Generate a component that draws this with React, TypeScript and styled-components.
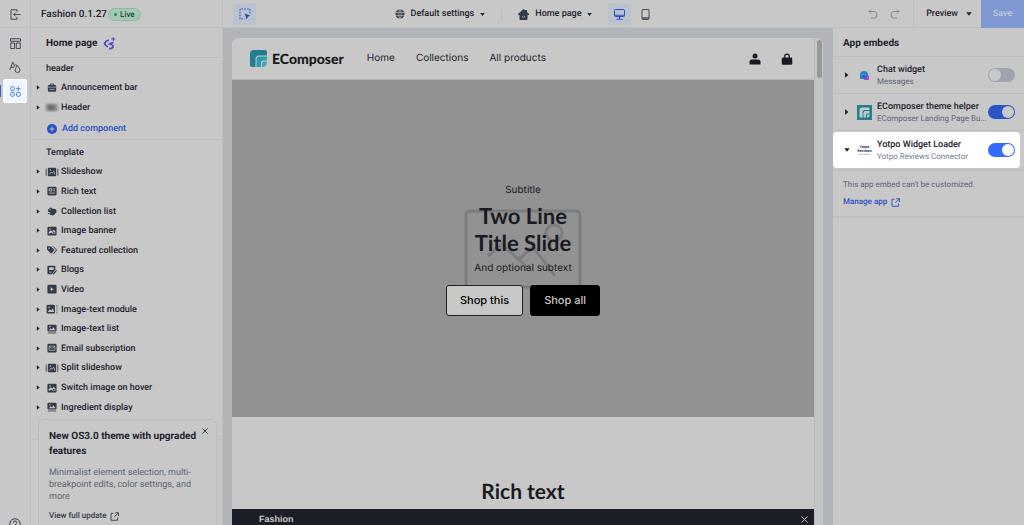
import React from 'react';
import styled, { createGlobalStyle, css } from 'styled-components';

const ui = `Roboto, Inter, sans-serif`;
const shop = `Inter, "Open Sans", sans-serif`;
const display = `Lato, "Open Sans", sans-serif`;

const c = {
  surface: '#c8c8c8',
  line: '#bdbec0',
  canvas: '#b1b4b9',
  ink: '#1e222d',
  icon: '#343b48',
  muted: '#5d6474',
  blue: '#2951c6',
  tint: '#b9c2cd',
};

const GlobalStyle = createGlobalStyle`
  * { box-sizing: border-box; }
  body { margin: 0; font-family: ${ui}; color: ${c.ink}; background: ${c.surface}; overflow: hidden; text-rendering: geometricPrecision; }
  button { font: inherit; color: inherit; background: none; border: 0; padding: 0; cursor: pointer; text-rendering: inherit; }
  h1, h2, h3, p, ul { margin: 0; padding: 0; font-weight: inherit; }
  ul { list-style: none; }
  a { text-decoration: none; color: inherit; }
  svg { display: block; flex: none; }
`;

const Page = styled.div`
  display: flex;
  flex-direction: column;
  height: 100vh;
`;

const TopBar = styled.header`
  display: grid;
  grid-template-columns: 223px 1fr 191px;
  flex: none;
  height: 28px;
  border-bottom: 1px solid ${c.line};
`;

const TopLeft = styled.div`
  display: flex;
  align-items: center;
  border-right: 1px solid ${c.line};
`;

const ExitButton = styled.button`
  display: flex;
  align-items: center;
  justify-content: center;
  width: 31px;
  height: 100%;
  margin-right: 10px;
  border-right: 1px solid ${c.line};
`;

const ThemeName = styled.span`
  font-size: 10px;
  font-weight: 500;
`;

const LiveBadge = styled.span`
  display: flex;
  align-items: center;
  gap: 3px;
  height: 13px;
  margin-left: 1px;
  padding: 0 5px;
  border: 1px solid #8fb8a2;
  border-radius: 7px;
  background: #a3c9b3;
  color: #20453a;
  font-size: 8px;
  font-weight: 500;
  &::before {
    content: '';
    width: 3px;
    height: 3px;
    border-radius: 50%;
    background: #238a5b;
  }
`;

const TopCenter = styled.div`
  display: grid;
  grid-template-columns: 1fr auto 1fr;
  align-items: center;
  padding-left: 10px;
`;

const CenterGroup = styled.div`
  display: flex;
  align-items: center;
  padding-right: 14px;
`;

const Tool = styled.button<{ $active?: boolean }>`
  display: flex;
  align-items: center;
  justify-content: center;
  width: 23px;
  height: 22px;
  border-radius: 3px;
  background: ${(p) => (p.$active ? c.tint : 'transparent')};
  color: ${(p) => (p.$active ? c.blue : c.icon)};
`;

const Menu = styled.button`
  display: flex;
  align-items: center;
  gap: 6px;
  font-size: 9px;
  font-weight: 500;
  white-space: nowrap;
`;

const Split = styled.span`
  width: 1px;
  height: 13px;
  margin: 0 16px;
  background: ${c.line};
`;

const Devices = styled.div`
  display: flex;
  gap: 3px;
  margin-left: 16px;
`;

const TopRight = styled.div`
  display: flex;
  align-items: center;
  justify-content: flex-end;
`;

const History = styled.div`
  display: flex;
  gap: 10px;
  padding-right: 12px;
  color: #85888f;
`;

const Preview = styled(Menu)`
  gap: 8px;
  height: 100%;
  padding: 0 9px 0 12px;
  border-left: 1px solid ${c.line};
`;

const Save = styled.button`
  width: 43px;
  height: 28px;
  background: #7f98d1;
  color: #bcc5d8;
  font-size: 9px;
  font-weight: 600;
`;

const Main = styled.div`
  display: grid;
  grid-template-columns: 31px 192px 1fr 191px;
  flex: 1;
  min-height: 0;
`;

const Rail = styled.nav`
  display: flex;
  flex-direction: column;
  align-items: center;
  padding-top: 3px;
  border-right: 1px solid ${c.line};
  overflow: hidden;
`;

const RailButton = styled.button<{ $active?: boolean }>`
  display: flex;
  align-items: center;
  justify-content: center;
  flex: none;
  width: 24px;
  height: 24px;
  border-radius: 3px;
  color: ${c.icon};
  ${(p) =>
    p.$active &&
    css`
      position: relative;
      background: #f1f7ff;
      box-shadow: inset 0 0 0 1px #fff;
      color: #4a7ff5;
      &::before {
        content: '';
        position: absolute;
        left: -3px;
        top: 6px;
        width: 1px;
        height: 12px;
        background: #3c63c9;
      }
    `}
`;

const Help = styled(RailButton)`
  margin-top: auto;
  margin-bottom: -11px;
`;

const Panel = styled.aside`
  position: relative;
  display: flex;
  flex-direction: column;
  border-right: 1px solid ${c.line};
  overflow: hidden;
`;

const PanelTitle = styled.h2`
  display: flex;
  align-items: center;
  gap: 6px;
  flex: none;
  height: 30px;
  padding: 1px 0 0 15px;
  border-bottom: 1px solid ${c.line};
  font-size: 10px;
  font-weight: 700;
`;

const Group = styled.section`
  flex: none;
  padding: 0 5px;
  border-bottom: 1px solid ${c.line};
`;

const GroupLabel = styled.h3`
  padding: 3px 10px 0;
  font-size: 9px;
  line-height: 17px;
  font-weight: 500;
`;

const Tree = styled.ul<{ $height: number }>`
  display: grid;
  grid-auto-rows: 1fr;
  height: ${(p) => p.$height}px;
`;

const TreeItem = styled.li`
  display: grid;
  grid-template-columns: 8px 14px 1fr;
  align-items: center;
  column-gap: 1px;
  font-size: 9px;
  font-weight: 500;
  white-space: nowrap;
`;

const TreeIcon = styled.span`
  display: flex;
  justify-content: center;
`;

const TreeName = styled.span`
  padding: 1px 0 0 1px;
`;

const AddButton = styled.button`
  display: flex;
  align-items: center;
  gap: 5px;
  height: 22px;
  padding: 1px 0 0 11px;
  color: ${c.blue};
  font-size: 9px;
  font-weight: 500;
`;

const TemplateGroup = styled(Group)`
  padding-top: 2px;
  padding-bottom: 22px;
`;

const Notice = styled.section`
  position: absolute;
  left: 7px;
  right: 5px;
  top: 391px;
  display: flex;
  flex-direction: column;
  gap: 8px;
  height: 130px;
  padding: 9px 10px;
  border: 1px solid #bbbcbf;
  border-radius: 6px;
  background: ${c.surface};
`;

const NoticeTitle = styled.h3`
  font-size: 10px;
  line-height: 15px;
  font-weight: 700;
  white-space: nowrap;
`;

const NoticeText = styled.p`
  color: ${c.muted};
  font-size: 9px;
  line-height: 12px;
`;

const IconLink = styled.a<{ $accent?: boolean }>`
  display: flex;
  align-items: center;
  gap: 4px;
  color: ${(p) => (p.$accent ? c.blue : c.icon)};
  font-size: 8px;
  line-height: 10px;
  font-weight: 500;
`;

const NoticeClose = styled.button`
  position: absolute;
  top: 8px;
  right: 8px;
`;

const Canvas = styled.main`
  display: flex;
  min-width: 0;
  padding: 10px 10px 0 9px;
  background: ${c.canvas};
`;

const Frame = styled.div`
  display: flex;
  flex: 1;
  min-width: 0;
  border-radius: 6px 6px 0 0;
  background: ${c.surface};
  overflow: hidden;
`;

const Store = styled.div`
  display: flex;
  flex-direction: column;
  flex: 1;
  min-width: 0;
`;

const ScrollTrack = styled.div`
  width: 9px;
  padding: 2px 1px;
  border-left: 1px solid #b9b9bb;
  background: #c4c4c4;
`;

const ScrollThumb = styled.div`
  width: 5px;
  height: 38px;
  margin-left: 1px;
  border-radius: 3px;
  background: #989898;
`;

const StoreHeader = styled.header`
  display: flex;
  align-items: center;
  flex: none;
  height: 42px;
  padding: 0 21px 0 18px;
  border-bottom: 1px solid #b9b9b9;
`;

const Brand = styled.a`
  display: flex;
  align-items: center;
  gap: 5px;
  color: #191919;
  font-family: ${display};
  font-size: 14px;
  font-weight: 900;
`;

const StoreNav = styled.nav`
  display: flex;
  gap: 21px;
  flex: 1;
  padding: 0 0 2px 23px;
  font-family: ${shop};
  font-size: 10px;
`;

const StoreActions = styled.div`
  display: flex;
  gap: 20px;
  color: #1b1a22;
`;

const Hero = styled.section`
  position: relative;
  display: flex;
  flex-direction: column;
  align-items: center;
  justify-content: center;
  flex: none;
  height: 337px;
  padding-bottom: 1px;
  background: #929292;
  font-family: ${shop};
  color: #1b1a22;
`;

const Placeholder = styled.svg`
  position: absolute;
  top: 50%;
  left: 50%;
  transform: translate(-50%, -50%);
`;

const HeroText = styled.p`
  position: relative;
  font-size: 10px;
  line-height: 18px;
`;

const HeroTitle = styled.h1`
  position: relative;
  margin: 3px 0;
  font-family: ${display};
  font-size: 22px;
  line-height: 27px;
  font-weight: 700;
  text-align: center;
`;

const HeroActions = styled.div`
  position: relative;
  display: flex;
  gap: 7px;
  margin-top: 8px;
`;

const HeroButton = styled.button<{ $solid?: boolean }>`
  height: 31px;
  padding: 0 13px;
  border: 1px solid ${(p) => (p.$solid ? '#000' : '#222')};
  border-radius: 3px;
  background: ${(p) => (p.$solid ? '#000' : c.surface)};
  color: ${(p) => (p.$solid ? '#c8c8c8' : '#000')};
  font-size: 11px;
  font-weight: 500;
`;

const RichText = styled.section`
  display: flex;
  justify-content: center;
  flex: 1;
  min-height: 0;
  padding-top: 61px;
  overflow: hidden;
`;

const RichTitle = styled.h2`
  color: #1b1a22;
  font-family: ${display};
  font-size: 21px;
  line-height: 27px;
  font-weight: 700;
`;

const AdminBar = styled.footer`
  display: flex;
  align-items: center;
  justify-content: space-between;
  flex: none;
  height: 16px;
  padding: 4px 6px 0 27px;
  background: #1b1e27;
  color: #c8c8c8;
  font-family: "Liberation Sans", sans-serif;
  font-size: 9px;
  font-weight: 700;
`;

const Settings = styled.aside`
  display: flex;
  flex-direction: column;
  min-width: 0;
`;

const SettingsTitle = styled.h2`
  flex: none;
  padding: 3px 10px 0;
  border-bottom: 1px solid ${c.line};
  font-size: 10px;
  line-height: 25px;
  font-weight: 700;
`;

const Embed = styled.label<{ $spot?: boolean }>`
  display: grid;
  grid-template-columns: 8px 15px 1fr 27px;
  align-items: center;
  flex: none;
  height: 37px;
  padding: 0 9px 0 11px;
  column-gap: 5px;
  border-bottom: 1px solid ${c.line};
  ${(p) =>
    p.$spot &&
    css`
      height: 36px;
      margin: 1px 4px 0 0;
      padding-right: 5px;
      border: 0;
      border-radius: 4px;
      background: #fff;
    `}
`;

const EmbedText = styled.span`
  display: flex;
  flex-direction: column;
  min-width: 0;
  padding-top: 2px;
`;

const EmbedName = styled.span`
  font-size: 9px;
  line-height: 12px;
  font-weight: 500;
  white-space: nowrap;
`;

const EmbedApp = styled.span<{ $spot?: boolean }>`
  color: ${(p) => (p.$spot ? '#737c91' : c.muted)};
  font-size: 8px;
  line-height: 12px;
  white-space: nowrap;
`;

const Toggle = styled.input<{ $spot?: boolean }>`
  appearance: none;
  display: flex;
  align-items: center;
  width: 27px;
  height: 14px;
  margin: 0;
  padding: 0 1px;
  border-radius: 7px;
  background: #a0a4ae;
  cursor: pointer;
  &::before {
    content: '';
    width: 12px;
    height: 12px;
    border-radius: 50%;
    background: ${(p) => (p.$spot ? '#fff' : c.surface)};
  }
  &:checked {
    justify-content: flex-end;
    background: ${(p) => (p.$spot ? '#346bff' : '#2a54c9')};
  }
`;

const EmbedDetail = styled.div`
  display: flex;
  flex-direction: column;
  gap: 7px;
  margin-top: 1px;
  padding: 9px 10px;
  border-top: 2px solid #c0c0c1;
  border-bottom: 2px solid #bfbfc1;
`;

const DetailText = styled.p`
  color: ${c.muted};
  font-size: 8px;
  line-height: 10px;
`;

const Caret = ({ down = false, size = 5 }: { down?: boolean; size?: number }) => (
  <svg width={size} height={size} viewBox="0 0 6 6" fill="currentColor" aria-hidden>
    {down ? <path d="M.3 1.2h5.4L3 4.8z" /> : <path d="M1 .3v5.4l3.4-2.7z" />}
  </svg>
);

const External = () => (
  <svg width="9" height="9" viewBox="0 0 18 18" fill="none" stroke="currentColor" strokeWidth="1.8" aria-hidden>
    <path d="M7 2.5H2v14h13V11M10.5 1.5H17V8M17 1.5 8.5 10" />
  </svg>
);

const Cross = ({ size = 7 }: { size?: number }) => (
  <svg width={size} height={size} viewBox="0 0 8 8" stroke="currentColor" strokeWidth="1.1" aria-hidden>
    <path d="M.5.5l7 7M7.5.5l-7 7" />
  </svg>
);

const ComposerMark = ({ size }: { size: number }) => (
  <svg width={size} height={size} viewBox="0 0 34 34" aria-hidden>
    <path d="M8 0h22q4 0 4 4v7H18q-7 0-7 7v16H4q-4 0-4-4V8q0-8 8-8z" fill="#247f93" />
    <path d="M19 13h15v8h-7q-5 0-5 5v8h-9V19q0-6 6-6z" fill="#2f9cb3" />
    <path d="M28 23h6q0 11-10 11v-6q0-5 4-5z" fill="#3aa5bb" />
  </svg>
);

type IconKind = 'case' | 'slides' | 'rich' | 'tagcut' | 'image' | 'caption' | 'tags' | 'blog' | 'video' | 'imagetext' | 'mail' | 'blur';

const hole = c.surface;
const shapes: Record<Exclude<IconKind, 'blur'>, React.ReactNode> = {
  case: (
    <>
      <path d="M8 5V2.5h8V5" fill="none" stroke="currentColor" strokeWidth="2" />
      <rect x="2" y="5" width="20" height="16" rx="2.5" fill="currentColor" />
      <path d="M2 10h20M6 15.5h12" stroke={hole} strokeWidth="1.6" />
    </>
  ),
  slides: (
    <>
      <path d="M-2 4v17M26 4v17" stroke="currentColor" strokeWidth="2" />
      <rect x="2" y="2" width="20" height="20" rx="2.5" fill="currentColor" />
      <path d="M5 18l5-6 3 3 3-5 3 8" fill="none" stroke={hole} strokeWidth="1.7" />
      <circle cx="8" cy="7" r="1.8" fill={hole} />
    </>
  ),
  rich: (
    <>
      <rect x="1" y="1.5" width="22" height="21" rx="2.5" fill="currentColor" />
      <path d="M5.5 6.5h6v5.5h-6zM14.5 7H19M14.5 11.5H19M5 17h14" stroke={hole} strokeWidth="1.9" fill="none" />
    </>
  ),
  tagcut: (
    <>
      <path d="M2 9l7-6 3 3 10 2 1 7-8 8-8-2 1-5-5-2z" fill="currentColor" />
      <circle cx="7.5" cy="8.5" r="1.5" fill={hole} />
      <path d="M2 18l6 1" stroke="currentColor" strokeWidth="2" />
    </>
  ),
  image: (
    <>
      <rect x="1" y="2" width="22" height="21" rx="2.5" fill="currentColor" />
      <path d="M4 18v-3l5-5 4 4 3-5 4 4v5z" fill={hole} />
      <path d="M6.5 20l3.5-5 3.5 5zM14 17l2.5-4 3 4z" fill="currentColor" />
      <circle cx="7" cy="7" r="1.8" fill={hole} />
    </>
  ),
  caption: (
    <>
      <rect x="1" y="2" width="22" height="16" rx="2.5" fill="currentColor" />
      <path d="M4 15l5-5 3 3 4-5 4 7z" fill={hole} />
      <circle cx="7" cy="6.5" r="1.7" fill={hole} />
      <path d="M2 21.5h20" stroke="currentColor" strokeWidth="2" />
    </>
  ),
  tags: (
    <>
      <path d="M0 3h9l9 9-8 9L0 11z" fill="currentColor" />
      <circle cx="5" cy="7.5" r="1.8" fill={hole} />
      <path d="M14 3l9 9-7 9" fill="none" stroke="currentColor" strokeWidth="2.4" />
    </>
  ),
  blog: (
    <>
      <path d="M3 2h15q2 0 2 2v7l-8 11H3q-2 0-2-2V4q0-2 2-2z" fill="currentColor" />
      <path d="M5 5.5h11V12H5z" fill={hole} />
      <path d="M15 22l8-9" stroke="currentColor" strokeWidth="3" />
      <path d="M5 17h6" stroke={hole} strokeWidth="1.8" />
    </>
  ),
  video: (
    <>
      <rect x="1" y="2" width="22" height="21" rx="3" fill="currentColor" />
      <path d="M9 8l7 4.5L9 17z" fill={hole} />
    </>
  ),
  imagetext: (
    <>
      <rect x="-1" y="2" width="20" height="21" rx="2.5" fill="currentColor" />
      <path d="M2 19l5-7 3 4 4-5 3 8z" fill={hole} />
      <circle cx="5" cy="7.5" r="1.8" fill={hole} />
      <path d="M22 4h4M24 4v17M22 21h4" stroke="currentColor" strokeWidth="1" />
    </>
  ),
  mail: (
    <>
      <rect x="1" y="2" width="22" height="21" rx="2.5" fill="currentColor" />
      <path d="M5 7.5h14v10H5zM5 8.5l7 4.5 7-4.5" stroke={hole} strokeWidth="1.5" fill="none" />
    </>
  ),
};

const BlurredThumb = styled.span`
  width: 12px;
  height: 7px;
  background: linear-gradient(90deg, #8d8d8d, #666 40%, #777 60%, #999);
  filter: blur(1px);
`;

const Glyph = ({ kind }: { kind: IconKind }) =>
  kind === 'blur' ? (
    <BlurredThumb />
  ) : (
    <svg width="10" height="10" viewBox="0 0 24 24" overflow="visible" color={c.icon} aria-hidden>
      {shapes[kind]}
    </svg>
  );

type Node = { name: string; kind: IconKind };

const headerNodes: Node[] = [
  { name: 'Announcement bar', kind: 'case' },
  { name: 'Header', kind: 'blur' },
];

const templateNodes: Node[] = [
  { name: 'Slideshow', kind: 'slides' },
  { name: 'Rich text', kind: 'rich' },
  { name: 'Collection list', kind: 'tagcut' },
  { name: 'Image banner', kind: 'image' },
  { name: 'Featured collection', kind: 'tags' },
  { name: 'Blogs', kind: 'blog' },
  { name: 'Video', kind: 'video' },
  { name: 'Image-text module', kind: 'imagetext' },
  { name: 'Image-text list', kind: 'caption' },
  { name: 'Email subscription', kind: 'mail' },
  { name: 'Split slideshow', kind: 'slides' },
  { name: 'Switch image on hover', kind: 'image' },
  { name: 'Ingredient display', kind: 'caption' },
];

const Nodes = ({ items, height }: { items: Node[]; height: number }) => (
  <Tree $height={height}>
    {items.map((n) => (
      <TreeItem key={n.name}>
        <Caret />
        <TreeIcon>
          <Glyph kind={n.kind} />
        </TreeIcon>
        <TreeName>{n.name}</TreeName>
      </TreeItem>
    ))}
  </Tree>
);

const ChatLogo = () => (
  <svg width="15" height="15" viewBox="0 0 30 30" aria-hidden>
    <path d="M14 15h10v9H14z" fill="#c33fc4" />
    <path d="M6 22v-8q0-8 8-8t8 8-8 8z" fill="#2580cc" />
    <path d="M9 15q5 7 10 0z" fill="#5147c4" />
    <circle cx="11.5" cy="12.5" r="1.2" fill="#8db6dc" />
    <circle cx="17" cy="12.5" r="1.2" fill="#8db6dc" />
  </svg>
);

const HelperLogo = () => (
  <svg width="15" height="15" viewBox="0 0 30 30" aria-hidden>
    <path d="M0 0h30v30H0z" fill="#25808e" />
    <path d="M10 5h13q2 0 2 2v3H15q-4 0-4 4v11H7q-2 0-2-2V10q0-5 5-5z" fill="#c8c8c8" />
    <path d="M16 12h9v5h-4q-3 0-3 3v5h-5v-9q0-4 3-4z" fill="#b9c6c8" />
    <path d="M22 19h3q0 6-5 6v-3q0-3 2-3z" fill="#c8c8c8" />
  </svg>
);

const YotpoLogo = () => (
  <svg width="15" height="15" viewBox="0 0 30 30" fontFamily="Inter, sans-serif" textAnchor="middle" fill="#25304f" aria-hidden>
    <text x="15" y="10" fontSize="7" fontWeight="700">Yotpo</text>
    <text x="15" y="17" fontSize="7" fontWeight="700">Reviews</text>
    <text x="15" y="24" fontSize="5" fill="#596175">Connector</text>
  </svg>
);

const embeds = [
  { name: 'Chat widget', app: 'Messages', logo: <ChatLogo />, on: false, spot: false },
  { name: 'EComposer theme helper', app: 'EComposer Landing Page Bu...', logo: <HelperLogo />, on: true, spot: false },
  { name: 'Yotpo Widget Loader', app: 'Yotpo Reviews Connector', logo: <YotpoLogo />, on: true, spot: true },
];

export default function App() {
  return (
    <Page>
      <GlobalStyle />
      <TopBar>
        <TopLeft>
          <ExitButton aria-label="Exit">
            <svg width="11" height="11" viewBox="0 0 22 22" fill="none" stroke={c.icon} strokeWidth="1.8">
              <path d="M14 6V1.5H2v19h12V16M21 11H7.5M11.5 7l-4 4 4 4" />
            </svg>
          </ExitButton>
          <ThemeName>Fashion 0.1.27</ThemeName>
          <LiveBadge>Live</LiveBadge>
        </TopLeft>
        <TopCenter>
          <Tool $active aria-label="Select element">
            <svg width="12" height="12" viewBox="0 0 24 24">
              <path d="M22 11V2H2v20h9" fill="none" stroke="currentColor" strokeWidth="2" strokeDasharray="3.5 2.2" />
              <path d="M11 11l12 4-5 2.5L15.5 23z" fill="currentColor" />
            </svg>
          </Tool>
          <CenterGroup>
            <Menu>
              <svg width="10" height="10" viewBox="0 0 20 20">
                <circle cx="10" cy="10" r="9" fill={c.icon} />
                <path d="M1 7h18M1 13h18M10 1v18M10 1q-8 9 0 18M10 1q8 9 0 18" fill="none" stroke={c.surface} strokeWidth="1.1" />
              </svg>
              Default settings
              <Caret down />
            </Menu>
            <Split />
            <Menu>
              <svg width="11" height="11" viewBox="0 0 22 22">
                <path d="M11 0l3 2.5V2h4v4l4 4v2h-3v8q0 2-2 2H5q-2 0-2-2v-8H0v-2z" fill={c.icon} />
                <path d="M8 15q3 3 6 0" fill="none" stroke={c.surface} strokeWidth="1.6" />
              </svg>
              Home page
              <Caret down />
            </Menu>
            <Devices>
              <Tool $active aria-label="Desktop">
                <svg width="11" height="11" viewBox="0 0 22 22" fill="none" stroke="currentColor" strokeWidth="2">
                  <rect x="1" y="1" width="20" height="14" rx="1.5" />
                  <path d="M1 12.5h20M11 15v5M5 20.5h12" />
                </svg>
              </Tool>
              <Tool aria-label="Tablet">
                <svg width="9" height="11" viewBox="0 0 18 22" fill="none" stroke="currentColor" strokeWidth="1.8">
                  <rect x="2" y="1" width="14" height="20" rx="2" />
                  <path d="M2 18h14" strokeWidth="2.5" />
                </svg>
              </Tool>
            </Devices>
          </CenterGroup>
        </TopCenter>
        <TopRight>
          <History>
            <button aria-label="Undo">
              <svg width="12" height="12" viewBox="0 0 24 24" fill="none" stroke="currentColor" strokeWidth="2">
                <path d="M8 3L4 7l4 4M4 7h11q5 0 5 6.5T15 20H8" />
              </svg>
            </button>
            <button aria-label="Redo">
              <svg width="12" height="12" viewBox="0 0 24 24" fill="none" stroke="currentColor" strokeWidth="2">
                <path d="M16 3l4 4-4 4M20 7H9q-5 0-5 6.5T9 20h7" />
              </svg>
            </button>
          </History>
          <Preview>
            Preview
            <Caret down size={6} />
          </Preview>
          <Save>Save</Save>
        </TopRight>
      </TopBar>

      <Main>
        <Rail>
          <RailButton aria-label="Sections">
            <svg width="11" height="11" viewBox="0 0 22 22" fill="none" stroke="currentColor" strokeWidth="1.8">
              <path d="M1 1.5h20v5H1zM1.5 10H9v11H1.5zM12.5 10h8v11h-8z" />
            </svg>
          </RailButton>
          <RailButton aria-label="Typography and colors">
            <svg width="12" height="12" viewBox="0 0 24 24" fill="none" stroke="currentColor" strokeWidth="1.8">
              <path d="M1.5 18L7.5 2.5l4.5 9M4 12.5h6M17 9.5q-5 6-5 8.5a5 5 0 0 0 10 0q0-2.5-5-8.5zM12.5 7.5l4.5 2" />
            </svg>
          </RailButton>
          <RailButton $active aria-label="App embeds">
            <svg width="11" height="11" viewBox="0 0 22 22" fill="none" stroke="currentColor" strokeWidth="2">
              <rect x="1.5" y="1.5" width="7" height="8" rx="2" />
              <rect x="1.5" y="13" width="7" height="7.5" rx="2" />
              <rect x="13" y="13" width="7.5" height="7.5" rx="2" />
              <path d="M16.5 1v9M12 5.5h9" />
            </svg>
          </RailButton>
          <Help aria-label="Help">
            <svg width="12" height="12" viewBox="0 0 24 24" fill="none" stroke="currentColor" strokeWidth="2">
              <circle cx="12" cy="12" r="10.5" />
              <path d="M8.5 9.5q0-3.5 3.5-3.5t3.5 3-3.5 4.5v1M12 16.5V19" />
            </svg>
          </Help>
        </Rail>

        <Panel>
          <PanelTitle>
            Home page
            <svg width="13" height="13" viewBox="0 0 26 26" fill="none" stroke="#5443c4" strokeWidth="3.5">
              <path d="M12 6q-6 1-9 7 2 5 7 6.500" />
              <path d="M12 23.500q8-.5 8-4.500t-7-5q3-3 8-3" />
              <path d="M20.5 0v8M16.5 4h8" strokeWidth="2" />
            </svg>
          </PanelTitle>
          <Group>
            <GroupLabel>header</GroupLabel>
            <Nodes items={headerNodes} height={39} />
            <AddButton>
              <svg width="10" height="10" viewBox="0 0 20 20">
                <circle cx="10" cy="10" r="10" fill="currentColor" />
                <path d="M10 5v10M5 10h10" stroke={c.surface} strokeWidth="1.8" />
              </svg>
              Add component
            </AddButton>
          </Group>
          <TemplateGroup>
            <GroupLabel>Template</GroupLabel>
            <Nodes items={templateNodes} height={255} />
          </TemplateGroup>
          <Notice>
            <NoticeTitle>
              New OS3.0 theme with upgraded
              <br />
              features
            </NoticeTitle>
            <NoticeText>
              Minimalist element selection, multi-
              <br />
              breakpoint edits, color settings, and
              <br />
              more
            </NoticeText>
            <IconLink href="#update">
              View full update
              <External />
            </IconLink>
            <NoticeClose aria-label="Close">
              <Cross size={6} />
            </NoticeClose>
          </Notice>
        </Panel>

        <Canvas>
          <Frame>
            <Store>
              <StoreHeader>
                <Brand href="#home">
                  <ComposerMark size={17} />
                  EComposer
                </Brand>
                <StoreNav>
                  <a href="#home">Home</a>
                  <a href="#collections">Collections</a>
                  <a href="#products">All products</a>
                </StoreNav>
                <StoreActions>
                  <button aria-label="Account">
                    <svg width="12" height="12" viewBox="0 0 24 24" fill="currentColor">
                      <circle cx="12" cy="6" r="5" />
                      <path d="M1 23v-5q0-5 5-5h12q5 0 5 5v5z" />
                    </svg>
                  </button>
                  <button aria-label="Cart">
                    <svg width="12" height="12" viewBox="0 0 24 24">
                      <path d="M7.5 10V6.5a4.5 4.5 0 0 1 9 0V10" fill="none" stroke="currentColor" strokeWidth="2.5" />
                      <rect x="1.5" y="9" width="21" height="14.5" rx="2.5" fill="currentColor" />
                    </svg>
                  </button>
                </StoreActions>
              </StoreHeader>
              <Hero>
                <Placeholder width="118" height="80" viewBox="0 0 118 80" fill="none" stroke="#7d7d7d" strokeWidth="3" aria-hidden>
                  <rect x="2" y="2" width="114" height="76" rx="4" />
                  <circle cx="90" cy="24" r="8" />
                  <path d="M24 47l14-12 26 24M55 50l14-12 22 29M69 38l-14 12" />
                </Placeholder>
                <HeroText>Subtitle</HeroText>
                <HeroTitle>
                  Two Line
                  <br />
                  Title Slide
                </HeroTitle>
                <HeroText>And optional subtext</HeroText>
                <HeroActions>
                  <HeroButton>Shop this</HeroButton>
                  <HeroButton $solid>Shop all</HeroButton>
                </HeroActions>
              </Hero>
              <RichText>
                <RichTitle>Rich text</RichTitle>
              </RichText>
              <AdminBar>
                Fashion
                <button aria-label="Close bar">
                  <Cross />
                </button>
              </AdminBar>
            </Store>
            <ScrollTrack>
              <ScrollThumb />
            </ScrollTrack>
          </Frame>
        </Canvas>

        <Settings>
          <SettingsTitle>App embeds</SettingsTitle>
          {embeds.map((e) => (
            <Embed key={e.name} $spot={e.spot}>
              <Caret down={e.spot} size={6} />
              {e.logo}
              <EmbedText>
                <EmbedName>{e.name}</EmbedName>
                <EmbedApp $spot={e.spot}>{e.app}</EmbedApp>
              </EmbedText>
              <Toggle type="checkbox" defaultChecked={e.on} $spot={e.spot} />
            </Embed>
          ))}
          <EmbedDetail>
            <DetailText>This app embed can't be customized.</DetailText>
            <IconLink href="#manage" $accent>
              Manage app
              <External />
            </IconLink>
          </EmbedDetail>
        </Settings>
      </Main>
    </Page>
  );
}
